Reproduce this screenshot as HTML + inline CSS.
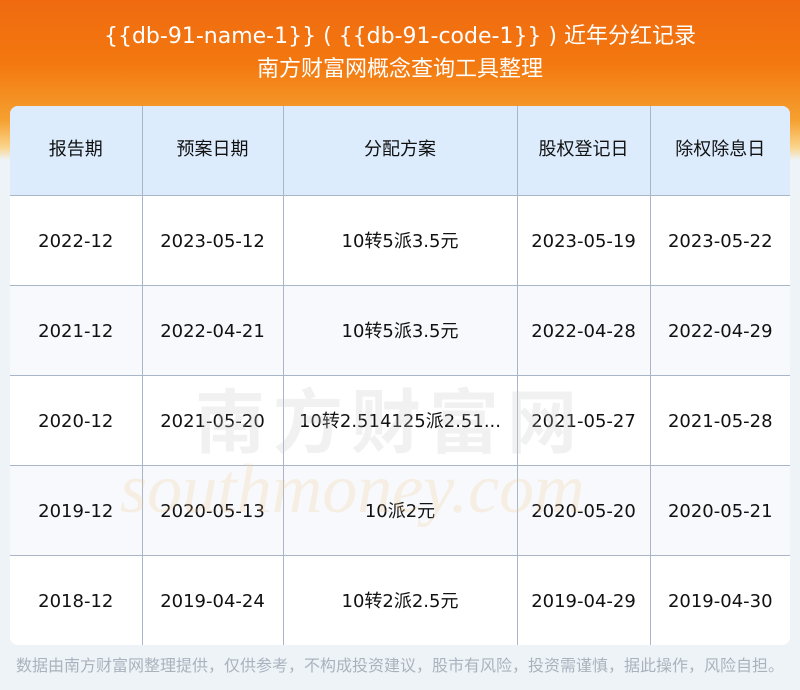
<!DOCTYPE html>
<html><head><meta charset="utf-8"><style>
*{margin:0;padding:0;box-sizing:border-box}
body{width:800px;height:690px;overflow:hidden;background:#eef3f8;font-family:"DejaVu Sans","Noto Sans CJK SC",sans-serif;position:relative}
.top{position:absolute;left:0;top:0;width:800px;height:160px;background:linear-gradient(180deg,#f06a10 0%,#f3780f 40%,#f5a030 75%,#fbd48a 92%,#eef3f8 100%)}
.t1{position:absolute;top:22px;width:800px;text-align:center;color:#fff;font-size:22px;line-height:30px;white-space:nowrap}
.t2{position:absolute;top:55px;width:800px;text-align:center;color:#fff;font-size:22px;line-height:30px}
table{position:absolute;left:10px;top:106px;width:780px;border-collapse:collapse;background:#fff;border-radius:8px;overflow:hidden;font-size:18px;line-height:22px;color:#111}
td,th{text-align:center;font-weight:normal;border-left:1px solid #a9b6c8;height:90px;white-space:nowrap;vertical-align:middle;padding-top:3px}
td:first-child,th:first-child{border-left:none}
th{background:#dcecfd;height:89px;border-bottom:1px solid #a9b6c8;padding-top:0}
tr.g td{background:#f7f9fc}
tr td{border-bottom:1px solid #a9b6c8}
tr:last-child td{border-bottom:none}
.wm{position:absolute;left:195px;top:378px;font-size:70px;line-height:80px;color:rgba(200,200,200,0.25);letter-spacing:8px;font-weight:bold;font-family:"Noto Sans CJK SC",sans-serif}
.wm2{position:absolute;left:120px;top:450px;font-size:70px;line-height:80px;color:rgba(248,200,140,0.22);font-style:italic;font-family:"Liberation Serif",serif}
.foot{position:absolute;left:16px;top:652px;font-size:16px;color:#aab3bd;white-space:nowrap}
</style></head><body>
<div class="top"></div>
<div class="t1">{{db-91-name-1}} ( {{db-91-code-1}} ) 近年分红记录</div>
<div class="t2">南方财富网概念查询工具整理</div>
<table>
<colgroup><col style="width:132px"><col style="width:141px"><col style="width:234px"><col style="width:133px"><col style="width:140px"></colgroup>
<tr><th>报告期</th><th>预案日期</th><th>分配方案</th><th>股权登记日</th><th>除权除息日</th></tr>
<tr><td>2022-12</td><td>2023-05-12</td><td>10转5派3.5元</td><td>2023-05-19</td><td>2023-05-22</td></tr>
<tr class="g"><td>2021-12</td><td>2022-04-21</td><td>10转5派3.5元</td><td>2022-04-28</td><td>2022-04-29</td></tr>
<tr><td>2020-12</td><td>2021-05-20</td><td>10转2.514125派2.51...</td><td>2021-05-27</td><td>2021-05-28</td></tr>
<tr class="g"><td>2019-12</td><td>2020-05-13</td><td>10派2元</td><td>2020-05-20</td><td>2020-05-21</td></tr>
<tr><td>2018-12</td><td>2019-04-24</td><td>10转2派2.5元</td><td>2019-04-29</td><td>2019-04-30</td></tr>
</table>
<div class="wm">南方财富网</div>
<div class="wm2">southmoney.com</div>
<div class="foot">数据由南方财富网整理提供，仅供参考，不构成投资建议，股市有风险，投资需谨慎，据此操作，风险自担。</div>
</body></html>
